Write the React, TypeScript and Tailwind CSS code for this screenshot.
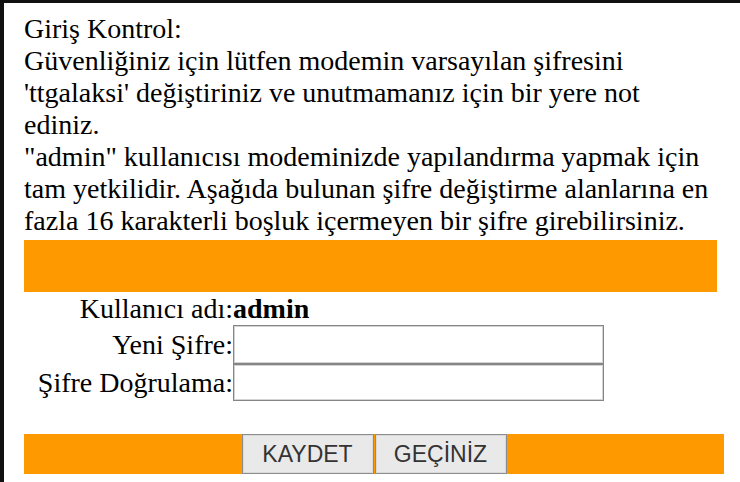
import React from 'react';

const Field: React.FC<{ label: string; children: React.ReactNode; rowClass: string }> = ({ label, children, rowClass }) => (
  <>
    <div className={`flex items-center justify-end ${rowClass}`}>{label}</div>
    <div className={`flex items-center ${rowClass}`}>{children}</div>
  </>
);

export default function App() {
  return (
    <div className="min-h-screen bg-[#111111] pt-[3px] pl-[4px]">
      <div className="min-h-[479px] bg-white pl-[20px] pt-[10px] [font-family:'Liberation_Serif',serif] text-[28px] text-black">
        <div className="w-[694px] leading-[32px]">
          Giriş Kontrol:<br />
          Güvenliğiniz için lütfen modemin varsayılan şifresini 'ttgalaksi' değiştiriniz ve unutmamanız için bir yere not ediniz.<br />
          "admin" kullanıcısı modeminizde yapılandırma yapmak için tam yetkilidir. Aşağıda bulunan şifre değiştirme alanlarına en fazla 16 karakterli boşluk içermeyen bir şifre girebilirsiniz.
        </div>
        <div className="mt-[3px] h-[52px] w-[693px] bg-[#ff9900]" />

        <div className="grid grid-cols-[209px_auto] leading-none">
          <Field label="Kullanıcı adı:" rowClass="h-[33px]">
            <span className="font-bold">admin</span>
          </Field>
          <Field label="Yeni Şifre:" rowClass="h-[39px]">
            <input type="password" className="h-[39px] w-[371px] border border-[#858585] bg-white shadow-[inset_0_0_0_1px_#d4d4d4] outline-none" />
          </Field>
          <Field label="Şifre Doğrulama:" rowClass="h-[37px]">
            <input type="password" className="h-[37px] w-[371px] border border-[#858585] bg-white shadow-[inset_0_0_0_1px_#d4d4d4] outline-none" />
          </Field>
        </div>

        <div className="mt-[33px] flex h-[40px] w-[700px] justify-center bg-[#ff9900] [font-family:'Liberation_Sans',sans-serif] text-[23px] text-[#333333]">
          <button className="h-[40px] w-[132px] border border-[#8c8c8c] bg-[#e9e9e9] shadow-[inset_0_0_0_1px_#dadada]">KAYDET</button>
          <button className="ml-[1px] h-[40px] w-[132px] border border-[#8c8c8c] bg-[#e9e9e9] shadow-[inset_0_0_0_1px_#dadada]">GEÇİNİZ</button>
        </div>
      </div>
    </div>
  );
}
